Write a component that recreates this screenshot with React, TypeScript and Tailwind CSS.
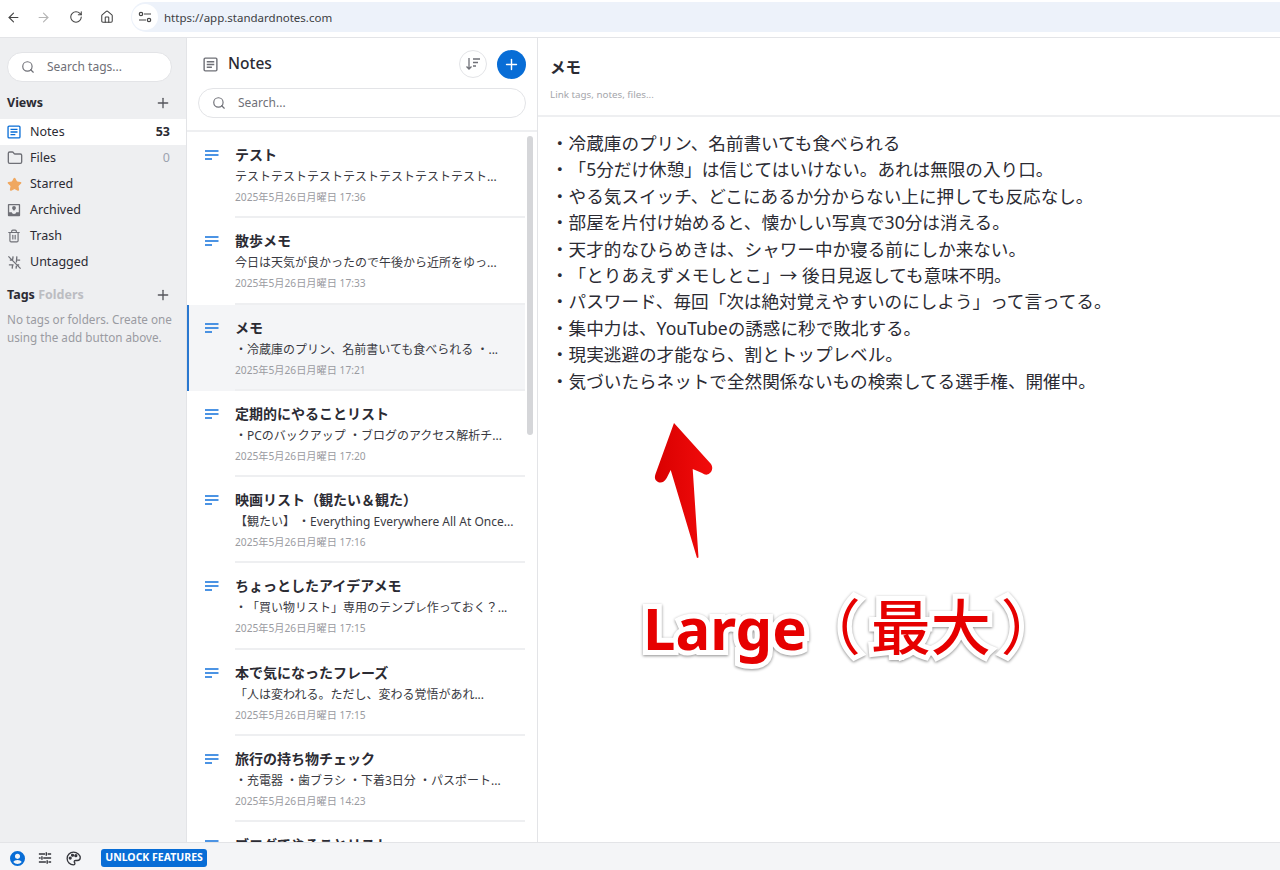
import { ArrowLeft, ArrowRight, RotateCw, Home, Plus, Search, Folder, Star, Trash2 } from 'lucide-react';

const notes = [
  { title: 'テスト', text: 'テストテストテストテストテストテストテスト...', date: '2025年5月26日月曜日 17:36' },
  { title: '散歩メモ', text: '今日は天気が良かったので午後から近所をゆっ...', date: '2025年5月26日月曜日 17:33' },
  { title: 'メモ', text: '・冷蔵庫のプリン、名前書いても食べられる ・...', date: '2025年5月26日月曜日 17:21', active: true },
  { title: '定期的にやることリスト', text: '・PCのバックアップ ・ブログのアクセス解析チ...', date: '2025年5月26日月曜日 17:20' },
  { title: '映画リスト（観たい＆観た）', text: '【観たい】 ・Everything Everywhere All At Once...', date: '2025年5月26日月曜日 17:16' },
  { title: 'ちょっとしたアイデアメモ', text: '・「買い物リスト」専用のテンプレ作っておく？...', date: '2025年5月26日月曜日 17:15' },
  { title: '本で気になったフレーズ', text: '「人は変われる。ただし、変わる覚悟があれ...', date: '2025年5月26日月曜日 17:15' },
  { title: '旅行の持ち物チェック', text: '・充電器 ・歯ブラシ ・下着3日分 ・パスポート...', date: '2025年5月26日月曜日 14:23' },
  { title: 'ブログでやることリスト', text: '・記事のリライト ・画像の差し替え', date: '2025年5月26日月曜日 14:20' },
];

const lines = [
  '・冷蔵庫のプリン、名前書いても食べられる',
  '・「5分だけ休憩」は信じてはいけない。あれは無限の入り口。',
  '・やる気スイッチ、どこにあるか分からない上に押しても反応なし。',
  '・部屋を片付け始めると、懐かしい写真で30分は消える。',
  '・天才的なひらめきは、シャワー中か寝る前にしか来ない。',
  '・「とりあえずメモしとこ」→ 後日見返しても意味不明。',
  '・パスワード、毎回「次は絶対覚えやすいのにしよう」って言ってる。',
  '・集中力は、YouTubeの誘惑に秒で敗北する。',
  '・現実逃避の才能なら、割とトップレベル。',
  '・気づいたらネットで全然関係ないもの検索してる選手権、開催中。',
];

function NoteIcon({ className }: { className: string }) {
  return (
    <svg viewBox="0 0 16 16" className={className} fill="none" stroke="currentColor" strokeWidth="1.5">
      <rect x="1.2" y="1.2" width="13.6" height="13.6" rx="1.2" />
      <path d="M4 5h8M4 8h8M4 11h5.5" />
    </svg>
  );
}

function ArchiveIcon() {
  return (
    <svg viewBox="0 0 16 16" className="h-[14px] w-[14px] text-[#6f7077]">
      <path fill="currentColor" fillRule="evenodd" d="M2 1h12a1 1 0 0 1 1 1v12a1 1 0 0 1-1 1H2a1 1 0 0 1-1-1V2a1 1 0 0 1 1-1Zm.5 1.5v8h3a2.5 2 0 0 0 5 0h3v-8ZM8 3.5a2.2 2.2 0 0 1 2.2 2.2C10.2 7 8 9 8 9S5.800 7 5.800 5.700A2.200 2.200 0 0 1 8 3.500Z" />
    </svg>
  );
}

function UntaggedIcon() {
  return (
    <svg viewBox="0 0 16 16" className="h-[15px] w-[15px] text-[#6f7077]" fill="none" stroke="currentColor" strokeWidth="1.4">
      <path d="M1.500 1.500l13 13M3 5.500h2M11 5.500h3M2 10.500h5M11 10.500h2M6.500 1.500 6 5M10.500 1.500 10 8M6 10.500l-.5 4M10 11.500l-.3 3" />
    </svg>
  );
}

function NoteLines() {
  return (
    <svg viewBox="0 0 14 10" className="mt-[3px] h-[10px] w-[14px] text-[#1272dc]" fill="none" stroke="currentColor" strokeWidth="1.4">
      <path d="M0 1h13.500M0 5h13.500M0 9h7" />
    </svg>
  );
}

function SidebarRow({ icon, label, count, active }: { icon: React.ReactNode; label: string; count?: string; active?: boolean }) {
  return (
    <div className={`flex h-[26px] items-center pl-[7px] pr-4 ${active ? 'bg-white' : ''}`}>
      <span className="flex w-[23px] items-center">{icon}</span>
      <span className="text-[12.5px] text-[#2b2b33]">{label}</span>
      {count && <span className={`ml-auto text-[12.5px] ${active ? 'font-bold text-[#2b2b33]' : 'text-[#9ca3af]'}`}>{count}</span>}
    </div>
  );
}

function NoteRow({ title, text, date, active }: { title: string; text: string; date: string; active?: boolean }) {
  return (
    <div className={`flex h-[86.3px] w-[338px] shrink-0 pl-[16px] ${active ? 'border-l-2 border-[#2a78d0] bg-[#f4f5f7]' : 'border-l-2 border-transparent'}`}>
      <div className="w-[30px] pt-[15px]"><NoteLines /></div>
      <div className="w-[290px] border-b-2 border-[#eeeff1] pt-[13px]">
        <div className="text-[14px] leading-[20px] font-bold whitespace-nowrap text-[#2b2b33]">{title}</div>
        <div className="mt-[2px] text-[12px] leading-[20px] whitespace-nowrap text-[#3a3a42]">{text}</div>
        <div className="text-[10.200px] leading-[20px] whitespace-nowrap text-[#9a9ba1]">{date}</div>
      </div>
    </div>
  );
}

export default function App() {
  return (
    <div className="relative flex h-[870px] w-[1280px] flex-col overflow-hidden bg-white font-['Noto_Sans','Noto_Sans_CJK_JP',sans-serif] text-[#2b2b33] [text-spacing-trim:space-all]">
      {/* browser toolbar */}
      <div className="flex h-[38px] shrink-0 items-start border-b border-[#e3e4e7] bg-white pt-[2px]">
        <div className="flex h-[30px] w-[131px] items-center pl-[-3px] text-[#444]">
          <span className="flex w-[27px] justify-center"><ArrowLeft size={15} strokeWidth={1.8} /></span>
          <span className="flex w-[33px] justify-center text-[#b5b5b5]"><ArrowRight size={15} strokeWidth={1.8} /></span>
          <span className="flex w-[32px] justify-center"><RotateCw size={14} strokeWidth={1.8} /></span>
          <span className="flex w-[30px] justify-center"><Home size={14} strokeWidth={1.8} /></span>
        </div>
        <div className="flex h-[30px] flex-1 items-center rounded-l-full bg-[#edf2fa]">
          <span className="ml-[1px] flex h-[26px] w-[26px] items-center justify-center rounded-full bg-white">
            <svg viewBox="0 0 14 12" className="h-[12px] w-[14px] text-[#444]" fill="none" stroke="currentColor" strokeWidth="1.200">
              <circle cx="3" cy="3" r="1.700" />
              <path d="M6 3h7M1 9h7" />
              <circle cx="11" cy="9" r="1.700" />
            </svg>
          </span>
          <span className="ml-[6px] translate-y-[1px] text-[11.500px] text-[#3c4043]">https://app.standardnotes.com</span>
        </div>
      </div>

      <div className="flex min-h-0 flex-1">
        {/* sidebar */}
        <div className="w-[187px] shrink-0 border-r border-[#e3e4e7] bg-[#eeeff1] pt-[14px]">
          <div className="mx-[7px] flex h-[30px] w-[165px] items-center rounded-full border border-[#e3e4e7] bg-white pl-[13px]">
            <Search size={14} className="text-[#6f7077]" />
            <span className="ml-[12px] text-[12px] text-[#6f7077]">Search tags...</span>
          </div>
          <div className="mt-[10px] flex h-[22px] items-center justify-between pl-[7px] pr-[15px]">
            <span className="text-[12.500px] font-bold">Views</span>
            <Plus size={16} className="text-[#55565c]" />
          </div>
          <div className="mt-[5px]">
            <SidebarRow active icon={<NoteIcon className="h-[14px] w-[14px] text-[#086dd6]" />} label="Notes" count="53" />
            <SidebarRow icon={<Folder size={16} className="text-[#6f7077]" />} label="Files" count="0" />
            <SidebarRow icon={<Star size={15} className="fill-[#f0a860] text-[#f0a860]" />} label="Starred" />
            <SidebarRow icon={<ArchiveIcon />} label="Archived" />
            <SidebarRow icon={<Trash2 size={14} className="text-[#6f7077]" />} label="Trash" />
            <SidebarRow icon={<UntaggedIcon />} label="Untagged" />
          </div>
          <div className="mt-[9px] flex h-[22px] items-center justify-between pl-[7px] pr-[15px]">
            <span className="text-[12.500px] font-bold">Tags <span className="text-[#bcbdc2]">Folders</span></span>
            <Plus size={16} className="text-[#55565c]" />
          </div>
          <p className="mt-[4px] px-[7px] text-[11.700px] leading-[18px] text-[#9a9ba1]">No tags or folders. Create one using the add button above.</p>
        </div>

        {/* notes list */}
        <div className="relative flex w-[351px] shrink-0 flex-col border-r border-[#e3e4e7]">
          <div className="h-[94px] shrink-0 border-b-2 border-[#eeeff1]">
            <div className="mt-[12px] flex h-[28px] items-center pl-[16px] pr-[11px]">
              <NoteIcon className="h-[15px] w-[15px] text-[#6f7077]" />
              <span className="ml-[10px] text-[15.500px] font-medium">Notes</span>
              <span className="ml-auto flex h-[28px] w-[28px] items-center justify-center rounded-full border border-[#e3e4e7]">
                <svg viewBox="0 0 16 16" className="h-[16px] w-[16px] text-[#6f7077]" fill="none" stroke="currentColor" strokeWidth="1.300">
                  <path d="M4 2v11M1.500 10.500 4 13l2.500-2.500M8 3h7M8 6.500h5M8 10h3" />
                </svg>
              </span>
              <span className="ml-[10px] flex h-[29px] w-[29px] items-center justify-center rounded-full bg-[#086dd6]">
                <Plus size={17} strokeWidth={2} className="text-white" />
              </span>
            </div>
            <div className="ml-[11px] mt-[10px] flex h-[30px] w-[328px] items-center rounded-full border border-[#e3e4e7] pl-[13px]">
              <Search size={14} className="text-[#6f7077]" />
              <span className="ml-[12px] text-[12px] text-[#6f7077]">Search...</span>
            </div>
          </div>
          <div className="min-h-0 flex-1 overflow-hidden">
            {notes.map((n) => (
              <NoteRow key={n.title} title={n.title} text={n.text} date={n.date} active={n.active} />
            ))}
          </div>
          {/* scrollbar */}
          <div className="absolute left-[340px] top-[98px] h-[299px] w-[6px] rounded-full bg-[#d5d6d9]" />
        </div>

        {/* editor */}
        <div className="min-w-0 flex-1">
          <div className="h-[79px] border-b-2 border-[#eeeff1] pl-[12px] pt-[18px]">
            <div className="text-[15.500px] leading-[22px] font-bold">メモ</div>
            <div className="mt-[10px] text-[9.800px] leading-[14px] text-[#a5a6ab]">Link tags, notes, files...</div>
          </div>
          <div className="pl-[13px] pt-[13px] text-[17.600px] leading-[26.400px] text-[#2b2b33]">
            {lines.map((l) => (
              <div key={l}>{l}</div>
            ))}
          </div>
        </div>
      </div>

      {/* footer */}
      <div className="flex h-[28px] shrink-0 items-center border-t border-[#e3e4e7] bg-[#f4f5f7] pl-[10px] pt-[3px]">
        <svg viewBox="0 0 16 16" className="h-[15px] w-[15px] text-[#086dd6]">
          <path fill="currentColor" fillRule="evenodd" d="M8 0a8 8 0 1 1 0 16A8 8 0 0 1 8 0Zm0 3a2.700 2.700 0 1 0 0 5.400A2.700 2.700 0 0 0 8 3Zm0 6.500c-2 0-3.800.8-4.500 2.100A5.800 5.800 0 0 0 8 13.800a5.800 5.800 0 0 0 4.500-2.200C11.800 10.300 10 9.500 8 9.500Z" />
        </svg>
        <svg viewBox="0 0 16 16" className="ml-[13px] h-[14px] w-[14px] text-[#35363c]" fill="none" stroke="currentColor" strokeWidth="1.600">
          <path d="M1 3.500h7M11 3.500h4M1 8h2M6 8h9M1 12.500h8M12 12.500h3M9.500 1.500v4M4.500 6v4M10.500 10.500v4" />
        </svg>
        <svg viewBox="0 0 16 16" className="ml-[14px] h-[15px] w-[15px] text-[#35363c]" fill="none" stroke="currentColor" strokeWidth="1.400">
          <path d="M8 1.200c-3.800 0-6.800 3-6.800 6.800s3 6.800 6.800 6.800c1 0 1.500-.7 1.500-1.400 0-1-.8-1.200-.8-2 0-.8.700-1.300 1.500-1.300h1.800c1.600 0 3.200-1 3.200-2.900 0-3-3.200-6-7.200-6Z" />
          <circle cx="4.500" cy="7.500" r="1" fill="currentColor" />
          <circle cx="7" cy="4.500" r="1" fill="currentColor" />
          <circle cx="10.500" cy="5" r="1" fill="currentColor" />
        </svg>
        <span className="ml-[20px] flex h-[18px] w-[106px] items-center justify-center rounded-[3px] bg-[#086dd6] text-[10.500px] font-bold text-white">UNLOCK FEATURES</span>
      </div>

      {/* red annotation */}
      <svg viewBox="0 0 70 145" className="absolute left-[650px] top-[418px] h-[145px] w-[70px]">
        <defs>
          <linearGradient id="arrowRed" x1="0" y1="0" x2="1" y2="0">
            <stop offset="0" stopColor="#d90000" />
            <stop offset="1" stopColor="#f20c0c" />
          </linearGradient>
        </defs>
        <path
          d="M24 5 61 46Q63.500 50 61 54 57 59 52 55L42.700 51 48.500 139.500 47 140 20.700 52 16.700 60Q13 66 8 64 3.500 62 5.500 56Z"
          fill="url(#arrowRed)"
        />
      </svg>
      <div className="absolute left-[643px] top-[587px] flex items-baseline whitespace-nowrap leading-[80px] font-bold text-[#e60000] [paint-order:stroke_fill] [-webkit-text-stroke:10px_white] drop-shadow-[0_1px_1.5px_rgba(0,0,0,0.45)]">
        <span className="text-[58px]">Large</span>
        <span className="ml-[-6px] text-[60px] font-normal">（</span>
        <span className="ml-[10px] text-[60px] font-medium">最大</span>
        <span className="ml-[10px] text-[60px] font-normal">）</span>
      </div>
    </div>
  );
}
